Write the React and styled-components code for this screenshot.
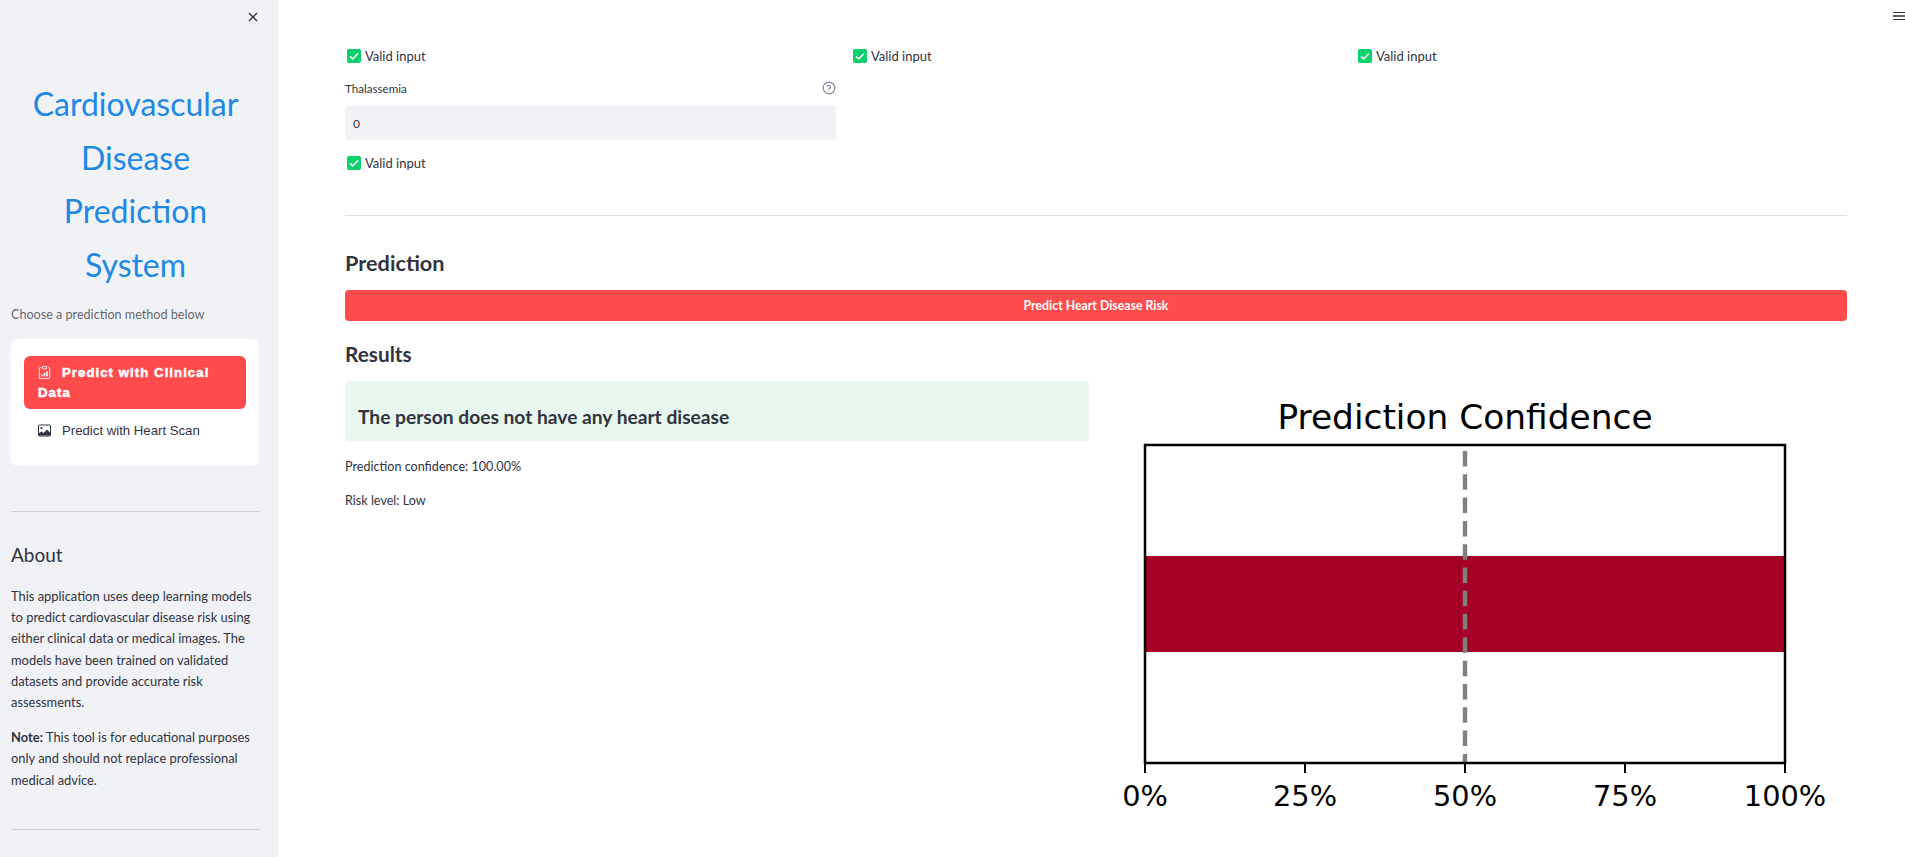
import React from "react";
import styled, { createGlobalStyle } from "styled-components";
import { BsClipboardData } from "react-icons/bs";

const SANS = 'Lato, "Noto Sans", sans-serif';

const GlobalStyle = createGlobalStyle`
  html, body {
    margin: 0;
    height: 100%;
    overflow: hidden;
    background: #fff;
  }
  body {
    font-family: ${SANS};
    color: #31333f;
  }
`;

const CloseIcon = () => (
  <svg width="12" height="12" viewBox="0 0 12 12" fill="none" stroke="#31333f" strokeWidth="1.4">
    <path d="M2 2l8 8M10 2l-8 8" />
  </svg>
);

const HelpIcon = () => (
  <svg width="14" height="14" viewBox="0 0 24 24" fill="none" stroke="#808495" strokeWidth="2" strokeLinecap="round">
    <circle cx="12" cy="12" r="10" />
    <path d="M9.2 9.2a2.9 2.9 0 0 1 5.6 1c0 1.9-2.8 2.4-2.8 4" />
    <path d="M12 17.6v.1" />
  </svg>
);

const CheckBadge = () => (
  <svg width="14" height="14" viewBox="0 0 14 14">
    <rect width="14" height="14" rx="2" fill="#09d16b" />
    <path d="M3 7.4l2.7 2.5L11 4.4" fill="none" stroke="#fff" strokeWidth="1.5" />
  </svg>
);

const PictureIcon = () => (
  <svg viewBox="0 0 13 12">
    <rect x="0.5" y="0.5" width="12" height="11" rx="1" fill="#fff" stroke="#31333f" />
    <circle cx="3.4" cy="3.6" r="1.1" fill="#31333f" />
    <path d="M0.5 11V9l3-2 2 1.4L9 5l3.5 3.5V11z" fill="#31333f" />
  </svg>
);

const ConfidenceChart = () => {
  const ticks = [
    [0, "0%"],
    [160, "25%"],
    [320, "50%"],
    [480, "75%"],
    [640, "100%"],
  ];
  return (
    <svg width="742" height="475" viewBox="0 0 742 475">
      <text x="360" y="62" textAnchor="middle" fontFamily='"DejaVu Sans", sans-serif' fontSize="34.4" fill="#000">
        Prediction Confidence
      </text>
      <g transform="translate(40 78)">
        <rect x="0" y="111" width="640" height="96" fill="#a50026" />
        <path d="M320 6V318" stroke="#808080" strokeWidth="4.4" strokeDasharray="15.5 7.8" />
        <rect x="0" y="0" width="640" height="318" fill="none" stroke="#000" strokeWidth="2.5" />
        {ticks.map(([x, label]) => (
          <g key={label}>
            <path d={`M${x} 318v10`} stroke="#000" strokeWidth="2" />
            <text x={x} y="361" textAnchor="middle" fontFamily='"DejaVu Sans", sans-serif' fontSize="28.8" fill="#000">
              {label}
            </text>
          </g>
        ))}
      </g>
    </svg>
  );
};

const Page = styled.div`
  display: flex;
  height: 857px;
  width: 1905px;
  overflow: hidden;
  position: relative;
`;

const Sidebar = styled.aside`
  width: 278px;
  flex: none;
  background: #f0f2f6;
  padding: 0 18px 0 11px;
  box-sizing: border-box;
  display: flex;
  flex-direction: column;
`;

const CloseRow = styled.div`
  display: flex;
  justify-content: flex-end;
  height: 17px;
  padding: 11px 1px 0 0;
`;

const Title = styled.h1`
  margin: 49px 0 0;
  text-align: center;
  color: #1e88e5;
  font-weight: 400;
  font-size: 32px;
  line-height: 53.5px;
`;

const Caption = styled.p`
  margin: 14px 0 0;
  font-size: 12.6px;
  line-height: 20px;
  color: rgba(49, 51, 63, 0.75);
`;

const NavCard = styled.nav`
  margin: 14px 0 0;
  width: 248px;
  height: 127px;
  box-sizing: border-box;
  padding: 17px 13px;
  background: #fff;
  border-radius: 7px;
`;

const NavItem = styled.div`
  box-sizing: border-box;
  padding: ${(p) => (p.$active ? "6.5px 14px" : "12px 14px")};
  border-radius: 6px;
  font-family: "Liberation Sans", Arial, sans-serif;
  font-size: 13.2px;
  line-height: 20px;
  font-weight: ${(p) => (p.$active ? 700 : 400)};
  letter-spacing: ${(p) => (p.$active ? "1.05px" : "0")};
  -webkit-text-stroke: ${(p) => (p.$active ? "0.5px #fff" : "0")};
  background: ${(p) => (p.$active ? "#ff4b4b" : "transparent")};
  color: ${(p) => (p.$active ? "#fff" : "#31333f")};

  svg {
    width: 13px;
    height: 13px;
    margin-right: 11px;
    vertical-align: -2px;
  }
`;

const Rule = styled.hr`
  border: none;
  height: 1px;
  margin: ${(p) => p.$margin};
  background: ${(p) => p.$color};
`;

const AboutTitle = styled.h3`
  margin: 30px 0 0;
  font-size: 19px;
  font-weight: 400;
  line-height: 26px;
  color: #31333f;
`;

const AboutText = styled.p`
  margin: ${(p) => p.$top} 0 0;
  width: 248px;
  font-size: 12.9px;
  line-height: 21.2px;
  color: #31333f;

  strong {
    font-weight: 700;
  }
`;

const Main = styled.main`
  flex: 1;
  min-width: 0;
  padding: 46px 58px 0 67px;
`;

const ValidGrid = styled.div`
  display: grid;
  grid-template-columns: 491px 490px 1fr;
  column-gap: 15px;
`;

const Valid = styled.div`
  display: flex;
  align-items: center;
  gap: 4px;
  padding-left: 2px;
  height: 20px;
  font-size: 13px;
  color: #31333f;
  margin-top: ${(p) => p.$top || 0};
`;

const FieldBlock = styled.div`
  width: 491px;
  margin-top: 12px;
`;

const LabelRow = styled.div`
  display: flex;
  justify-content: space-between;
  align-items: center;
  height: 20px;
  font-size: 11.6px;
  color: #31333f;
`;

const FieldInput = styled.div`
  margin-top: 8px;
  height: 34px;
  box-sizing: border-box;
  padding: 0 8px;
  display: flex;
  align-items: center;
  background: #f0f2f6;
  border-radius: 4px;
  font-size: 12px;
  color: #31333f;
`;

const SectionTitle = styled.h2`
  margin: ${(p) => p.$margin};
  font-size: ${(p) => p.$size};
  font-weight: 700;
  line-height: 28px;
  color: #31333f;
`;

const PredictButton = styled.button`
  display: block;
  width: 100%;
  height: 31px;
  margin-top: 13px;
  border: none;
  border-radius: 4px;
  background: #ff4b4b;
  color: #fff;
  font-family: ${SANS};
  font-size: 12.3px;
  font-weight: 700;
`;

const ResultGrid = styled.div`
  display: grid;
  grid-template-columns: 744px 1fr;
  column-gap: 16px;
  margin-top: 13px;
`;

const ChartCell = styled.div`
  margin-top: -14px;
`;

const Alert = styled.div`
  height: 60px;
  box-sizing: border-box;
  display: flex;
  align-items: center;
  padding: 10px 13px 0;
  background: #e8f8ee;
  border-radius: 4px;
  font-size: 19.2px;
  font-weight: 700;
  color: #31333f;
`;

const ResultText = styled.p`
  margin: ${(p) => p.$margin};
  font-size: 12.6px;
  line-height: 18px;
  color: #31333f;
`;

const MenuButton = styled.div`
  position: absolute;
  top: 12px;
  right: 0;
  width: 12px;
  height: 6px;
  border-top: 1px solid #31333f;
  border-bottom: 1px solid #31333f;

  &::after {
    content: "";
    display: block;
    height: 2px;
    margin-top: 2px;
    background: #5f6069;
  }
`;

export default function App() {
  return (
    <>
      <GlobalStyle />
      <Page>
        <Sidebar>
          <CloseRow>
            <CloseIcon />
          </CloseRow>
          <Title>
            Cardiovascular
            <br />
            Disease
            <br />
            Prediction
            <br />
            System
          </Title>
          <Caption>Choose a prediction method below</Caption>
          <NavCard>
            <NavItem $active>
              <BsClipboardData />
              Predict with Clinical Data
            </NavItem>
            <NavItem>
              <PictureIcon />
              Predict with Heart Scan
            </NavItem>
          </NavCard>
          <Rule $margin="45px 0 0" $color="#cfd1d6" />
          <AboutTitle>About</AboutTitle>
          <AboutText $top="18px">
            This application uses deep learning models to predict cardiovascular
            disease risk using either clinical data or medical images. The models
            have been trained on validated datasets and provide accurate risk
            assessments.
          </AboutText>
          <AboutText $top="14px">
            <strong>Note:</strong> This tool is for educational purposes only and
            should not replace professional medical advice.
          </AboutText>
          <Rule $margin="38px 0 0" $color="#cfd1d6" />
        </Sidebar>
        <Main>
          <ValidGrid>
            <Valid>
              <CheckBadge />
              Valid input
            </Valid>
            <Valid>
              <CheckBadge />
              Valid input
            </Valid>
            <Valid>
              <CheckBadge />
              Valid input
            </Valid>
          </ValidGrid>
          <FieldBlock>
            <LabelRow>
              Thalassemia
              <HelpIcon />
            </LabelRow>
            <FieldInput>0</FieldInput>
            <Valid $top="13px">
              <CheckBadge />
              Valid input
            </Valid>
          </FieldBlock>
          <Rule $margin="42px 0 0" $color="#dcdde0" />
          <SectionTitle $margin="33px 0 0" $size="21.7px">Prediction</SectionTitle>
          <PredictButton>Predict Heart Disease Risk</PredictButton>
          <SectionTitle $margin="19px 0 0" $size="20.8px">Results</SectionTitle>
          <ResultGrid>
            <div>
              <Alert>The person does not have any heart disease</Alert>
              <ResultText $margin="17px 0 0">Prediction confidence: 100.00%</ResultText>
              <ResultText $margin="16px 0 0">Risk level: Low</ResultText>
            </div>
            <ChartCell>
              <ConfidenceChart />
            </ChartCell>
          </ResultGrid>
        </Main>
        <MenuButton />
      </Page>
    </>
  );
}
